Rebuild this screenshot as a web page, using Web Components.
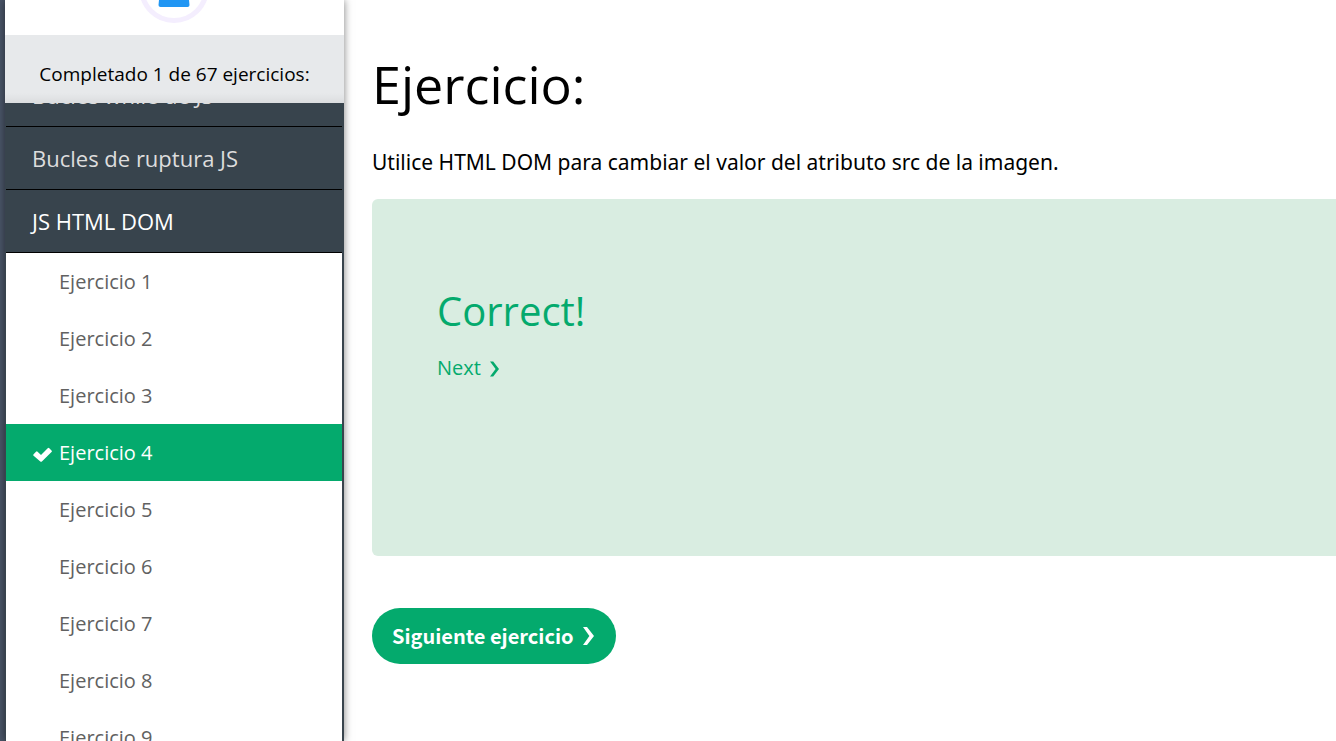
<!DOCTYPE html>
<html lang="es">
<head>
<meta charset="utf-8">
<meta name="viewport" content="width=device-width, initial-scale=1">
<title>Ejercicios de JavaScript</title>
<style>
body { margin: 0; background: #fff; color: #000; font-family: "Open Sans", "Noto Sans", sans-serif; }
</style>
</head>
<body>
<exercise-app></exercise-app>
<script>
const define = (name, html) => {
  const template = document.createElement('template');
  template.innerHTML = html;
  customElements.define(name, class extends HTMLElement {
    constructor() {
      super();
      this.attachShadow({ mode: 'open' }).append(template.content.cloneNode(true));
    }
  });
};

define('user-badge', `
<style>
:host { display: flex; justify-content: center; height: 35px; background: #fff; margin-right: 1px; }
svg { width: 72px; height: 24px; }
</style>
<svg viewBox="0 0 72 24" role="img" aria-label="Usuario">
  <circle cx="36" cy="-12" r="32.5" fill="none" stroke="#f4eefe" stroke-width="5"/>
  <path d="M21 0H51L51.5 5Q51.5 7 49.5 7H22.5Q20.5 7 20.5 5Z" fill="#2196f3"/>
</svg>`);

define('progress-note', `
<style>
:host { display: block; box-sizing: border-box; height: 68px; padding-top: 24px; text-align: center;
  font-size: 19px; line-height: 30px;
  background: linear-gradient(transparent 58px, rgba(0,0,0,.05)), #e7e9eb; }
</style>
<slot></slot>`);

define('topic-link', `
<style>
:host { display: block; }
a { display: block; box-sizing: border-box; height: 63px; padding: 15px 26px; border-bottom: 1px solid #000;
  background: #38444d; color: #ddd; font-size: 22px; line-height: 32px; text-decoration: none; white-space: nowrap; }
:host([open]) a { color: #fff; }
</style>
<a href="#"><slot></slot></a>`);

define('exercise-link', `
<style>
:host { display: block; }
a { display: flex; align-items: center; height: 57px; padding-left: 26px; background: #fff;
  color: #616161; font-size: 20px; line-height: 30px; text-decoration: none; }
svg { width: 20px; height: 18px; margin-right: 7px; visibility: hidden; }
:host([done]) a { background: #04aa6d; color: #fff; }
:host([done]) svg { visibility: visible; }
</style>
<a href="#"><svg viewBox="0 0 20 18" aria-hidden="true"><path fill="currentColor" d="M1.6 10.2 4 7.7Q4.8 7 5.6 7.7L9 11 15.7 4.2Q16.5 3.5 17.3 4.2L19.5 6.4Q20.3 7.2 19.5 8L9.9 17.4Q9.1 18.1 8.3 17.4L1.6 11.8Q.8 11 1.6 10.2Z"/></svg><slot></slot></a>`);

define('side-bar', `
<style>
:host { display: flex; flex-direction: column; flex: 0 0 339px; height: 100vh; position: relative;
  box-shadow: 0 0 8px rgba(0,0,0,.5); background: #fff; }
.scroller { flex: 1; overflow: hidden; border: solid #38444d; border-width: 0 2px 0 1px; }
nav { margin-top: -39px; }
</style>
<user-badge></user-badge>
<progress-note>Completado 1 de 67 ejercicios:</progress-note>
<div class="scroller"><nav aria-label="Ejercicios"><slot></slot></nav></div>`);

define('result-panel', `
<style>
:host { display: block; box-sizing: border-box; height: 357px; padding: 84px 65px; border-radius: 6px 0 0 6px;
  background: #d9ede1; color: #04aa6d; }
h2 { margin: 0; font-size: 40px; line-height: 56px; font-weight: 400; }
a { display: inline-flex; align-items: center; gap: 7px; margin-top: 14px; color: inherit; font-size: 20px; line-height: 30px; text-decoration: none; }
svg { width: 12px; height: 16px; margin-top: 2px; }
</style>
<h2><slot></slot></h2>
<a href="#">Next <svg viewBox="0 0 12 16" aria-hidden="true"><path fill="currentColor" d="M2 .5H5.2L11 8 5.2 15.5H2L7.6 8Z"/></svg></a>`);

define('next-button', `
<style>
:host { display: block; }
button { display: flex; align-items: center; gap: 8px; height: 56px; padding: 0 20px; border: 0; border-radius: 28px;
  background: #04aa6d; color: #fff; font: 700 20px/32px "Noto Sans CJK SC", sans-serif; cursor: pointer; white-space: nowrap; }
svg { width: 14px; height: 18px; }
</style>
<button type="button"><slot></slot><svg viewBox="0 0 14 18" aria-hidden="true"><path fill="currentColor" d="M1 0H5L12 9 5 18H1L7.4 9Z"/></svg></button>`);

define('exercise-app', `
<style>
:host { display: flex; min-height: 100vh; overflow: hidden; }
.edge { flex: 0 0 5px; background: #4a5568; }
main { flex: 1; min-width: 0; padding: 46px 0 0 28px; }
h1 { margin: 0; font-size: 52px; line-height: 76px; font-weight: 400; }
p { margin: 25px 0 22px; font-family: "Noto Sans", Verdana, sans-serif; font-size: 21px; line-height: 30px; }
next-button { margin-top: 52px; }
</style>
<div class="edge"></div>
<side-bar>
  <topic-link>Bucles while de JS</topic-link>
  <topic-link>Bucles de ruptura JS</topic-link>
  <topic-link open>JS HTML DOM</topic-link>
  <exercise-link>Ejercicio 1</exercise-link>
  <exercise-link>Ejercicio 2</exercise-link>
  <exercise-link>Ejercicio 3</exercise-link>
  <exercise-link done>Ejercicio 4</exercise-link>
  <exercise-link>Ejercicio 5</exercise-link>
  <exercise-link>Ejercicio 6</exercise-link>
  <exercise-link>Ejercicio 7</exercise-link>
  <exercise-link>Ejercicio 8</exercise-link>
  <exercise-link>Ejercicio 9</exercise-link>
</side-bar>
<main>
  <h1>Ejercicio:</h1>
  <p>Utilice HTML DOM para cambiar el valor del atributo src de la imagen.</p>
  <result-panel>Correct!</result-panel>
  <next-button>Siguiente ejercicio</next-button>
</main>`);
</script>
</body>
</html>
